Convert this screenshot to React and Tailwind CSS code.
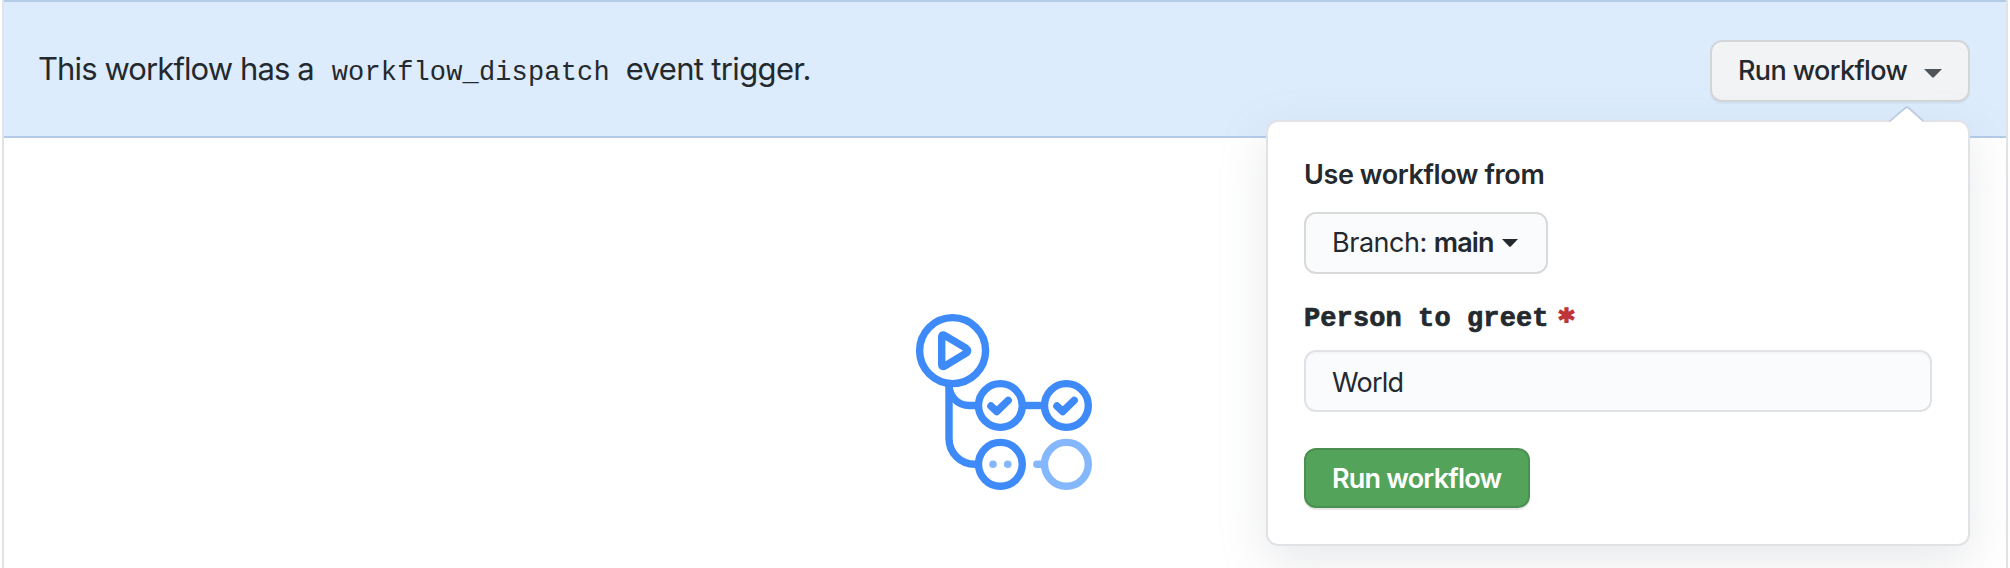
function Caret({ className }) {
  return (
    <svg viewBox="0 0 16 8" className={className} fill="currentColor" aria-hidden="true">
      <path d="M0 0H16L8.8 7.4Q8 8.2 7.2 7.4Z" />
    </svg>
  );
}

function WorkflowGraph() {
  return (
    <svg
      viewBox="912 310 184 184"
      className="h-[184px] w-[184px]"
      fill="none"
      stroke="#3d8af8"
      strokeWidth="7.4"
      strokeLinecap="round"
      strokeLinejoin="round"
      aria-hidden="true"
    >
      <circle cx="952.6" cy="350.6" r="33" />
      <path d="M941.7 337.5Q941.7 333.6 945 335.6L966 348.2Q969.4 350.7 966 353.2L945 365.8Q941.7 367.8 941.7 363.9Z" />
      <path d="M949 384V438.5C949 453 960.5 464.3 975 464.3H977" strokeLinecap="butt" />
      <path d="M949 384C949 396.5 957.5 405.5 969.5 405.5H977" strokeLinecap="butt" />
      <path d="M1024 405.5H1043" strokeLinecap="butt" />
      <circle cx="1000.4" cy="405.5" r="21.9" />
      <circle cx="1066.4" cy="405.5" r="21.9" />
      <path d="M990.9 406L996.7 411.5L1008.2 400.3" />
      <path d="M1056.9 406L1062.7 411.5L1074.2 400.3" />
      <circle cx="1000.4" cy="464.3" r="21.9" />
      <g fill="#84b7fb" stroke="none">
        <circle cx="993" cy="464.3" r="3.8" />
        <circle cx="1007.7" cy="464.3" r="3.8" />
      </g>
      <g stroke="#84b7fb">
        <path d="M1036.8 464.3H1044" />
        <circle cx="1066.4" cy="464.3" r="21.9" />
      </g>
    </svg>
  );
}

function DispatchPanel() {
  return (
    <form className="absolute top-[80px] right-0 flex w-[704px] flex-col items-start rounded-xl border-2 border-[#e1e2e6] bg-white px-9 pt-8 pb-9 shadow-[0_16px_48px_rgba(149,157,165,0.22)]">
      <svg
        viewBox="0 0 36 17"
        className="absolute -top-[16px] right-[43px] h-[17px] w-9"
        fill="none"
        aria-hidden="true"
      >
        <path d="M0 17L16.2 2Q18 .4 19.8 2L36 17Z" fill="#fff" />
        <path d="M.5 15.4L16.2 2Q18 .4 19.8 2L34.5 15.4" stroke="#bccddf" strokeWidth="1.8" />
      </svg>
      <label className="h-[42px] text-[27px] leading-[42px] font-semibold tracking-[-0.4px]">
        Use workflow from
      </label>
      <button
        type="button"
        className="mt-4 flex h-[62px] w-[244px] items-center rounded-xl border-2 border-[#d8dad9] bg-[#fafbfd] pl-[26px] text-[27px] leading-[42px] tracking-[-0.47px]"
      >
        <span>Branch:</span>
        <span className="ml-[7px] font-semibold tracking-[-0.9px]">main</span>
        <Caret className="ml-[8px] h-2 w-4" />
      </button>
      <label className="mt-6 flex h-[42px] items-center font-['Liberation_Mono',monospace] text-[27px] leading-[42px] font-bold tracking-[0.1px] [-webkit-text-stroke:0.7px_currentColor]">
        Person to greet
        <span className="mt-[2px] ml-[9px] font-['DejaVu_Sans_Mono',monospace] text-[30px] leading-[42px] text-[#bf3438] [-webkit-text-stroke:1.6px_currentColor]">
          *
        </span>
      </label>
      <input
        defaultValue="World"
        className="mt-[10px] h-[62px] w-full rounded-xl border-2 border-[#e1e2e6] bg-[#fafbfd] px-[26px] pt-[2px] text-[27px] leading-[42px] tracking-[-0.75px] shadow-[inset_0_2px_0_rgba(225,228,232,0.2)] outline-none"
      />
      <button
        type="button"
        className="mt-9 h-[60px] w-[226px] rounded-xl border-2 border-[#4b9051] bg-[#54a35a] pt-[2px] pl-[26px] text-left text-[27px] leading-[42px] font-semibold tracking-[-0.8px] whitespace-nowrap text-white shadow-[0_2px_0_rgba(27,31,35,0.1)]"
      >
        Run workflow
      </button>
    </form>
  );
}

export default function App() {
  return (
    <div className="h-[568px] overflow-hidden bg-white pr-[2px] pl-[2px] font-['Inter',sans-serif] text-[#24292e]">
      <div className="flex h-full flex-col border-x-2 border-[#e2e3e9]">
        <header className="flex h-[138px] shrink-0 items-center justify-between border-y-2 border-[#b4cbe7] bg-[#dcecfd] pr-9 pl-[34px]">
          <p className="flex items-baseline pt-[3px] text-[31px] leading-[48px] whitespace-nowrap">
            <span className="tracking-[-0.9px]">This workflow has a</span>
            <code className="ml-[18px] font-['Liberation_Mono',monospace] text-[27px] tracking-[0.15px]">
              workflow_dispatch
            </code>
            <span className="ml-4 tracking-[-0.65px]">event trigger.</span>
          </p>
          <div className="relative z-10 mt-[4px]">
            <button
              type="button"
              className="flex h-[62px] w-[260px] items-center rounded-xl border-2 border-[#d3d6d8] bg-[#f2f3f5] pl-[26px] text-[27px] leading-[42px] font-medium tracking-[-0.62px] shadow-[0_2px_0_rgba(27,31,35,0.04)]"
            >
              Run workflow
              <Caret className="mt-[5px] ml-[17px] h-[9px] w-[18px] text-[#4f5459]" />
            </button>
            <DispatchPanel />
          </div>
        </header>
        <main className="pt-[172px] pl-[908px]">
          <WorkflowGraph />
        </main>
      </div>
    </div>
  );
}
